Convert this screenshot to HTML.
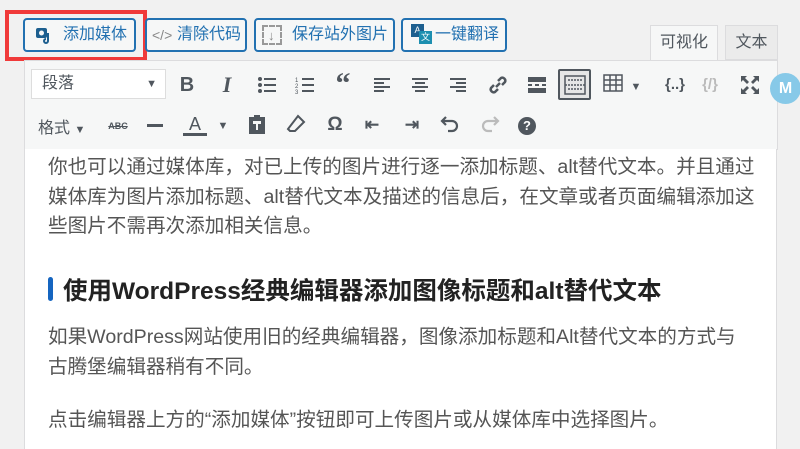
<!DOCTYPE html>
<html><head><meta charset="utf-8"><style>
*{margin:0;padding:0;box-sizing:border-box}
body{width:800px;height:448px;overflow:hidden;background:#f1f1f1;font-family:"Liberation Sans","Noto Sans CJK SC",sans-serif;position:relative}
.a{position:absolute}
.btn{position:absolute;top:18px;height:34px;border:2px solid #2271b1;border-radius:4px;background:#f6f7f7;color:#2271b1;font-size:16px;line-height:30px;padding-left:38px;white-space:nowrap}
.ic{position:absolute;color:#50575e;font-size:17px;font-weight:bold;text-align:center;width:24px;line-height:24px}
.s{position:absolute}
.t{position:absolute;left:48px;font-size:19.6px;color:#555;white-space:nowrap;line-height:29px}
</style></head><body>
<div class="a" style="left:5px;top:10px;width:142px;height:51px;border:4px solid #f03a3a"></div>
<div class="btn" style="left:23px;width:113px">
<svg class="a" style="left:10px;top:6px" width="18" height="18" viewBox="0 0 18 18"><rect x="1" y="2" width="11" height="10" rx="2" fill="#1d5f8f"/><circle cx="6.5" cy="7" r="2.5" fill="#f6f7f7"/><path d="M13 7v8a2 2 0 1 1-2-2" stroke="#1d5f8f" stroke-width="2" fill="none"/></svg>添加媒体</div>
<div class="btn" style="left:145px;width:102px;padding-left:30px"><span class="a" style="left:5px;top:0;color:#888;font-size:14px">&lt;/&gt;</span>清除代码</div>
<div class="btn" style="left:254px;width:141px;padding-left:36px"><span class="a" style="left:6px;top:5px;width:20px;height:20px;border:2px dashed #999"></span><span class="a" style="left:12px;top:1px;color:#888;font-size:13px">↓</span>保存站外图片</div>
<div class="btn" style="left:401px;width:106px;padding-left:32px"><span class="a" style="left:8px;top:4px;width:13px;height:13px;background:#1d5f8f;color:#fff;font-size:9px;line-height:13px;text-align:center">A</span><span class="a" style="left:16px;top:11px;width:13px;height:13px;background:#1d8fb0;color:#fff;font-size:9px;line-height:13px;text-align:center">文</span>一键翻译</div>
<div class="a" style="left:650px;top:25px;width:68px;height:36px;background:#f6f7f7;border:1px solid #dcdcde;border-bottom:none;font-size:16px;color:#50575e;text-align:center;line-height:34px">可视化</div>
<div class="a" style="left:725px;top:25px;width:53px;height:35px;background:#ebebeb;border:1px solid #dcdcde;font-size:16px;color:#50575e;text-align:center;line-height:34px">文本</div>
<div class="a" style="left:24px;top:60px;width:754px;height:90px;background:#f6f7f7;border:1px solid #dcdcde"></div>
<div class="a" style="left:31px;top:69px;width:135px;height:30px;background:#fff;border:1px solid #ddd;font-size:16px;color:#50575e;line-height:28px;padding-left:10px">段落<span class="a" style="right:8px;top:0;font-size:11px">▼</span></div>
<div class="ic" style="left:175px;top:73px;font-size:20px">B</div>
<div class="ic" style="left:215px;top:73px;font-style:italic;font-family:'Liberation Serif';font-size:22px">I</div>
<svg class="s" style="left:257px;top:76px" width="20" height="18" viewBox="0 0 20 18" fill="#50575e"><circle cx="3" cy="3" r="2"/><circle cx="3" cy="9" r="2"/><circle cx="3" cy="15" r="2"/><rect x="7" y="2" width="12" height="2"/><rect x="7" y="8" width="12" height="2"/><rect x="7" y="14" width="12" height="2"/></svg>
<svg class="s" style="left:295px;top:76px" width="20" height="18" viewBox="0 0 20 18" fill="#50575e"><text x="0" y="6" font-size="6" font-family="Liberation Sans">1</text><text x="0" y="12" font-size="6" font-family="Liberation Sans">2</text><text x="0" y="18" font-size="6" font-family="Liberation Sans">3</text><rect x="7" y="2" width="12" height="2"/><rect x="7" y="8" width="12" height="2"/><rect x="7" y="14" width="12" height="2"/></svg>
<div class="ic" style="left:331px;top:72px;font-size:30px;font-family:'Liberation Serif'">“</div>
<svg class="s" style="left:374px;top:76px" width="18" height="18" viewBox="0 0 18 18" fill="#50575e"><rect y="2" width="16" height="2"/><rect y="6" width="10" height="2"/><rect y="10" width="16" height="2"/><rect y="14" width="10" height="2"/></svg>
<svg class="s" style="left:412px;top:76px" width="18" height="18" viewBox="0 0 18 18" fill="#50575e"><rect y="2" width="16" height="2"/><rect x="3" y="6" width="10" height="2"/><rect y="10" width="16" height="2"/><rect x="3" y="14" width="10" height="2"/></svg>
<svg class="s" style="left:450px;top:76px" width="18" height="18" viewBox="0 0 18 18" fill="#50575e"><rect y="2" width="16" height="2"/><rect x="6" y="6" width="10" height="2"/><rect y="10" width="16" height="2"/><rect x="6" y="14" width="10" height="2"/></svg>
<svg class="s" style="left:487px;top:74px" width="22" height="22" viewBox="0 0 22 22" fill="none" stroke="#50575e" stroke-width="2.5"><path d="M9 13l4-4M7 11l-3 3a3 3 0 0 0 4 4l3-3M15 11l3-3a3 3 0 0 0-4-4l-3 3"/></svg>
<svg class="s" style="left:528px;top:76px" width="20" height="18" viewBox="0 0 20 18" fill="#50575e"><rect y="1" width="18" height="5"/><rect y="8" width="4" height="2"/><rect x="7" y="8" width="4" height="2"/><rect x="14" y="8" width="4" height="2"/><rect y="12" width="18" height="5"/></svg>
<div class="a" style="left:558px;top:69px;width:33px;height:31px;border:2px solid #50575e;border-radius:2px;background:#e6e6e6"></div>
<svg class="s" style="left:564px;top:75px" width="22" height="20" viewBox="0 0 22 20" fill="none" stroke="#50575e" stroke-width="1.5"><rect x="1" y="1" width="20" height="18"/><path d="M1 10h20M4 5h14M4 14h14" stroke-dasharray="2 1"/></svg>
<svg class="s" style="left:603px;top:74px" width="20" height="18" viewBox="0 0 20 18" fill="none" stroke="#50575e" stroke-width="1.5"><rect x="1" y="1" width="18" height="16"/><path d="M1 6h18M1 11h18M7 1v16M13 1v16"/></svg>
<div class="ic" style="left:624px;top:75px;font-size:11px">▼</div>
<div class="ic" style="left:663px;top:73px;font-size:15px">{..}</div>
<div class="ic" style="left:698px;top:73px;color:#bbb;font-size:15px">{/}</div>
<svg class="s" style="left:740px;top:75px" width="20" height="20" viewBox="0 0 20 20" fill="#50575e"><path d="M1 1h6L5 3l4 4-2 2-4-4-2 2zM19 1v6l-2-2-4 4-2-2 4-4-2-2zM1 19v-6l2 2 4-4 2 2-4 4 2 2zM19 19h-6l2-2-4-4 2-2 4 4 2-2z"/></svg>
<div class="a" style="left:770px;top:73px;width:31px;height:31px;border-radius:50%;background:#87c9e8;color:#fff;font-weight:bold;font-size:16px;text-align:center;line-height:31px">M</div>
<div class="a" style="left:38px;top:114px;font-size:16px;color:#50575e">格式 <span style="font-size:11px">▼</span></div>
<div class="ic" style="left:106px;top:114px;font-size:9px;text-decoration:line-through">ABC</div>
<div class="a" style="left:147px;top:124px;width:16px;height:3px;background:#50575e"></div>
<div class="ic" style="left:183px;top:112px;font-weight:normal;font-size:18px">A</div>
<div class="a" style="left:183px;top:133px;width:24px;height:3px;background:#50575e"></div>
<div class="ic" style="left:211px;top:114px;font-size:11px">▼</div>
<svg class="s" style="left:248px;top:114px" width="18" height="20" viewBox="0 0 18 20" fill="#50575e"><path d="M1 3h5V1h6v2h5v17H1z"/><rect x="5" y="7" width="8" height="3" fill="#f6f7f7"/><rect x="8" y="10" width="2" height="6" fill="#f6f7f7"/></svg>
<svg class="s" style="left:286px;top:114px" width="20" height="20" viewBox="0 0 20 20" fill="none" stroke="#50575e" stroke-width="2"><path d="M12 2l6 6-9 9H4L2 15z"/></svg>
<div class="ic" style="left:323px;top:113px;font-size:19px">Ω</div>
<div class="ic" style="left:360px;top:113px">⇤</div>
<div class="ic" style="left:400px;top:113px">⇥</div>
<svg class="s" style="left:440px;top:115px" width="20" height="18" viewBox="0 0 20 18" fill="none" stroke="#50575e" stroke-width="2.2"><path d="M6 2L2 6l4 4M2 6h10a5 5 0 0 1 0 10H8"/></svg>
<svg class="s" style="left:480px;top:115px" width="20" height="18" viewBox="0 0 20 18" fill="none" stroke="#bbb" stroke-width="2.2"><path d="M14 2l4 4-4 4M18 6H8a5 5 0 0 0 0 10h4"/></svg>
<div class="a" style="left:518px;top:117px;width:18px;height:18px;border-radius:50%;background:#50575e;color:#fff;font-size:13px;font-weight:bold;text-align:center;line-height:18px">?</div>
<div class="a" style="left:24px;top:149px;width:753px;height:300px;background:#fff;border-left:1px solid #dcdcde;border-right:1px solid #dcdcde"></div>
<div class="t" style="top:153px">你也可以通过媒体库，对已上传的图片进行逐一添加标题、alt替代文本。并且通过</div>
<div class="t" style="top:183px">媒体库为图片添加标题、alt替代文本及描述的信息后，在文章或者页面编辑添加这</div>
<div class="t" style="top:212px">些图片不需再次添加相关信息。</div>
<div class="a" style="left:48px;top:277px;width:5px;height:24px;border-radius:3px;background:#1565c0"></div>
<div class="a" style="left:63px;top:272px;font-size:24.5px;font-weight:bold;color:#222;white-space:nowrap">使用WordPress经典编辑器添加图像标题和alt替代文本</div>
<div class="t" style="top:323px">如果WordPress网站使用旧的经典编辑器，图像添加标题和Alt替代文本的方式与</div>
<div class="t" style="top:353px">古腾堡编辑器稍有不同。</div>
<div class="t" style="top:406px">点击编辑器上方的“添加媒体”按钮即可上传图片或从媒体库中选择图片。</div>
</body></html>
